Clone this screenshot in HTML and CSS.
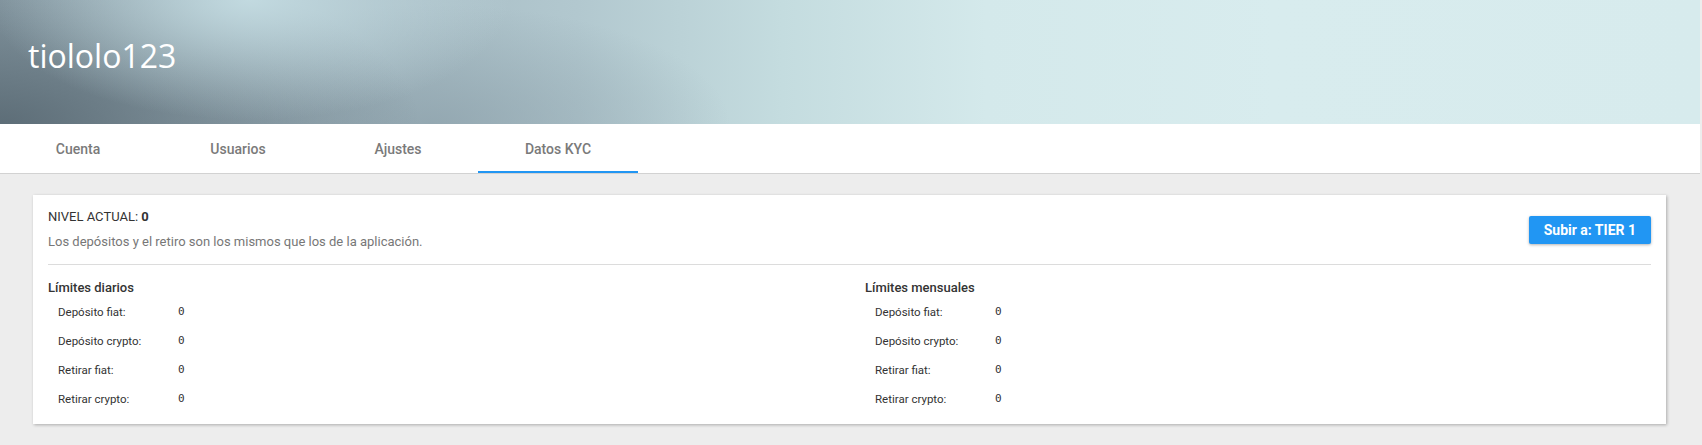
FILE: index.html
```html
<!DOCTYPE html>
<html lang="es">
<head>
<meta charset="utf-8">
<title>tiololo123</title>
<link rel="stylesheet" href="styles.css">
</head>
<body>
<header class="hero">
  <h1 class="hero-title">tiololo123</h1>
</header>
<nav class="tabs">
  <a class="tab">Cuenta</a>
  <a class="tab">Usuarios</a>
  <a class="tab">Ajustes</a>
  <a class="tab tab-active">Datos KYC</a>
</nav>
<main class="content">
  <section class="card">
    <div class="card-top">
      <div class="level">
        <div class="level-title">NIVEL ACTUAL: <b>0</b></div>
        <div class="level-desc">Los depósitos y el retiro son los mismos que los de la aplicación.</div>
      </div>
      <button class="btn-up">Subir a: TIER 1</button>
    </div>
    <div class="divider"></div>
    <div class="limits">
      <div class="limit-col">
        <div class="limit-title">Límites diarios</div>
        <div class="limit-row"><span class="limit-label">Depósito fiat:</span><span class="limit-value">0</span></div>
        <div class="limit-row"><span class="limit-label">Depósito crypto:</span><span class="limit-value">0</span></div>
        <div class="limit-row"><span class="limit-label">Retirar fiat:</span><span class="limit-value">0</span></div>
        <div class="limit-row"><span class="limit-label">Retirar crypto:</span><span class="limit-value">0</span></div>
      </div>
      <div class="limit-col">
        <div class="limit-title">Límites mensuales</div>
        <div class="limit-row"><span class="limit-label">Depósito fiat:</span><span class="limit-value">0</span></div>
        <div class="limit-row"><span class="limit-label">Depósito crypto:</span><span class="limit-value">0</span></div>
        <div class="limit-row"><span class="limit-label">Retirar fiat:</span><span class="limit-value">0</span></div>
        <div class="limit-row"><span class="limit-label">Retirar crypto:</span><span class="limit-value">0</span></div>
      </div>
    </div>
  </section>
</main>
</body>
</html>
```

FILE: styles.css
```css
* { box-sizing: border-box; }

html, body {
  margin: 0;
  padding: 0;
}

body {
  background: #ededed;
  font-family: Roboto, "Liberation Sans", Arial, sans-serif;
  color: #333;
}

.hero {
  height: 124px;
  margin-right: 2px;
  padding: 34px 0 0 28px;
  background:
    radial-gradient(ellipse 260px 120px at 250px 0px, rgba(196, 220, 226, 0.95), rgba(196, 220, 226, 0)),
    radial-gradient(ellipse 420px 170px at 0px 124px, rgba(88, 104, 114, 0.9), rgba(88, 104, 114, 0)),
    radial-gradient(ellipse 300px 120px at 430px 124px, rgba(140, 160, 170, 0.75), rgba(140, 160, 170, 0)),
    linear-gradient(90deg, #8c9fa9 0%, #a3b7c0 18%, #b2c8cf 34%, #c4dcdf 46%, #d4e9eb 58%, #d8ecee 75%, #d7ebed 100%);
}

.hero-title {
  margin: 0;
  font-family: "Open Sans", "Noto Sans", sans-serif;
  font-weight: 400;
  font-size: 32px;
  line-height: 44px;
  color: #ffffff;
}

.tabs {
  display: flex;
  height: 50px;
  margin-right: 2px;
  padding-left: 0;
  background: #ffffff;
  border-bottom: 1px solid #d2d2d2;
}

.tab {
  width: 160px;
  display: flex;
  align-items: center;
  justify-content: center;
  font-size: 14px;
  font-weight: 500;
  color: #7a7a7a;
  border-bottom: 2px solid transparent;
  padding-top: 2px;
}

.tab:first-child {
  margin-left: -2px;
}

.tab-active {
  border-bottom-color: #2196f3;
}

.content {
  padding: 21px 36px 20px 33px;
}

.card {
  background: #ffffff;
  box-shadow: 1px 1px 3px rgba(0, 0, 0, 0.28);
  padding: 13px 15px 11px 15px;
}

.card-top {
  display: flex;
  justify-content: space-between;
  align-items: center;
}

.level-title {
  font-size: 13px;
  line-height: 18px;
  color: #333;
}

.level-title b {
  font-weight: 700;
}

.level-desc {
  margin-top: 6px;
  font-size: 13px;
  line-height: 20px;
  color: #777777;
}

.btn-up {
  height: 28px;
  padding: 0 15px;
  border: none;
  border-radius: 2px;
  background: #2196f3;
  color: #ffffff;
  font-family: Roboto, "Liberation Sans", Arial, sans-serif;
  font-size: 14px;
  font-weight: 700;
  box-shadow: 0 1px 3px rgba(0, 0, 0, 0.3);
}

.divider {
  height: 1px;
  background: #dcdcdc;
  margin-top: 12px;
}

.limits {
  display: grid;
  grid-template-columns: 1fr 1fr;
  column-gap: 31px;
  margin-top: 14px;
}

.limit-title {
  font-size: 13px;
  font-weight: 500;
  line-height: 18px;
  color: #333;
}

.limit-row {
  display: flex;
  align-items: center;
  height: 29px;
  padding-left: 10px;
}

.limit-label {
  width: 120px;
  font-size: 11.5px;
  color: #333;
}

.limit-value {
  font-family: "DejaVu Sans Mono", "Liberation Mono", monospace;
  font-size: 11px;
  color: #333;
}
```
